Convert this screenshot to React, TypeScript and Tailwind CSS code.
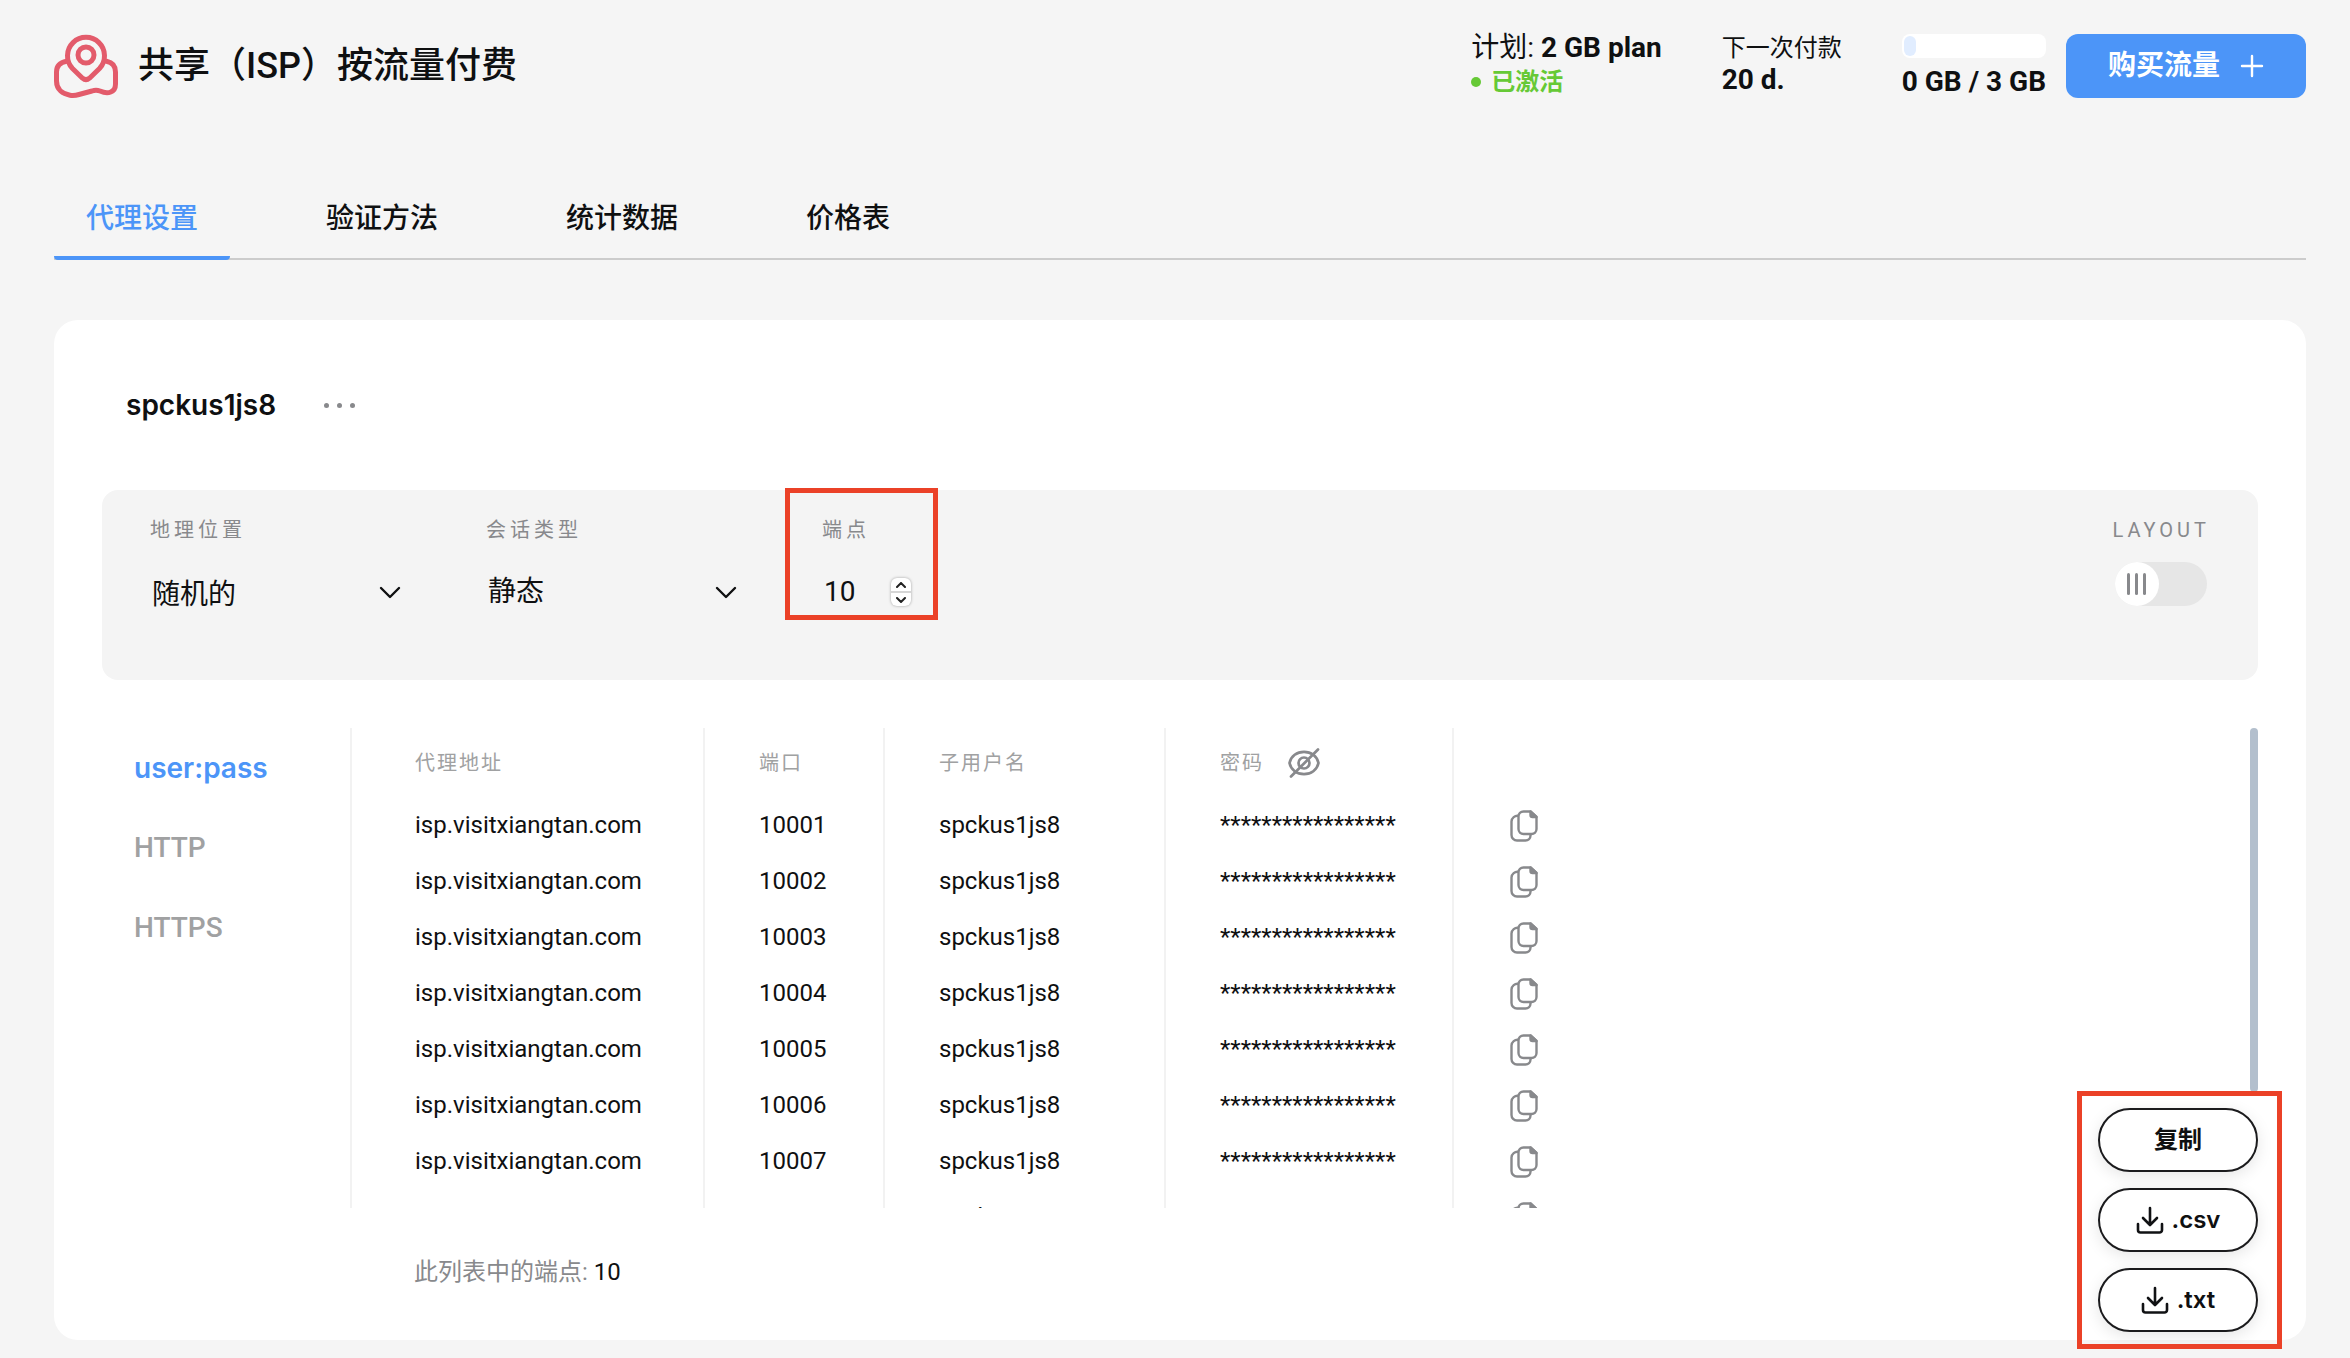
import { useState } from 'react'

const tabs = ['代理设置', '验证方法', '统计数据', '价格表']
const authModes = ['user:pass', 'HTTP', 'HTTPS']

const endpoints = Array.from({ length: 10 }, (_, i) => ({
  host: 'isp.visitxiangtan.com',
  port: 10001 + i,
  user: 'spckus1js8',
}))

function MapPinIcon() {
  return (
    <svg viewBox="0 0 64 64" className="h-16 w-16 shrink-0" fill="none" stroke="#e35b6b" strokeWidth="5" strokeLinecap="round" strokeLinejoin="round">
      <circle cx="32" cy="21" r="8" />
      <path d="M28.500 44.200 18.500 34.500A18.500 18.500 0 1 1 45.500 34.500L35.500 44.200Q32 47.200 28.500 44.200Z" />
      <path d="M12.500 27.200Q2.500 29 2.500 38V47C2.500 56 9 60 16 61.200Q20 62 25 60.500L38 57Q42 55.500 46 57C54 60.500 61.500 58.500 61.500 50V38Q61.500 29 52.500 27.200" />
    </svg>
  )
}

function Chevron() {
  return (
    <svg viewBox="0 0 24 24" className="pointer-events-none h-6 w-6" fill="none" stroke="#0f1011" strokeWidth="2.400" strokeLinecap="round" strokeLinejoin="round">
      <path d="m3 8 9 9 9-9" />
    </svg>
  )
}

function HiddenEyeIcon() {
  return (
    <svg viewBox="0 0 32 32" className="h-8 w-8" fill="none" stroke="#88898c" strokeWidth="2.700" strokeLinecap="round">
      <path d="M1.500 16C3 9 9 4.800 16 4.800S29 9 30.500 16C29 23 23 27.200 16 27.200S3 23 1.500 16Z" />
      <circle cx="16" cy="16" r="5.500" />
      <path d="M3 29.500 30 2.500" />
    </svg>
  )
}

function CopyIcon() {
  return (
    <svg viewBox="0 0 28 32" className="h-8 w-7" fill="none" stroke="#88898c" strokeWidth="2.400" strokeLinejoin="round">
      <path d="M13.500 1.500h7l6 5.500v12a5 5 0 0 1-5 5h-8a5 5 0 0 1-5-5V6.500a5 5 0 0 1 5-5Z" />
      <path d="M8.500 5.800A6 6 0 0 0 1.500 11.500v13.500a5.500 5.500 0 0 0 5.500 5.500h8.500a5 5 0 0 0 5-5V24" />
      <path d="M20.500 1.500V5a2 2 0 0 0 2 2h4Z" fill="#88898c" />
    </svg>
  )
}

function DownloadIcon() {
  return (
    <svg viewBox="0 0 28 28" className="h-7 w-7" fill="none" stroke="#111214" strokeWidth="2.600" strokeLinecap="round" strokeLinejoin="round">
      <path d="M14 2v16M7 12l7 7 7-7" />
      <path d="M2 18v6a2.500 2.500 0 0 0 2.500 2.500h19A2.500 2.500 0 0 0 26 24v-6" />
    </svg>
  )
}

function Header() {
  return (
    <header className="flex items-start justify-between">
      <div className="flex items-center gap-5">
        <MapPinIcon />
        <h1 className="text-4xl font-medium">共享（ISP）按流量付费</h1>
      </div>
      <div className="flex items-start gap-5">
        <div className="mr-10 text-[28px] leading-7">
          <p>
            计划: <b>2 GB plan</b>
          </p>
          <p className="mt-1.5 flex items-center gap-2.5 text-2xl leading-7 font-bold text-[#66c936]">
            <span className="h-2.5 w-2.5 rounded-full bg-[#66c936]" />
            已激活
          </p>
        </div>
        <div className="mr-10 text-2xl leading-7">
          <p>下一次付款</p>
          <p className="mt-0.5 text-[28px] leading-8 font-bold">20 d.</p>
        </div>
        <div>
          <div className="h-6 rounded-lg bg-white p-0.5">
            <div className="h-full w-3 rounded-lg bg-[#e1edff]" />
          </div>
          <p className="mt-2 text-[28px] leading-8 font-bold">0 GB / 3 GB</p>
        </div>
        <button className="flex h-16 w-60 items-center justify-center gap-5 rounded-xl bg-[#4c95f8] text-[28px] font-bold text-white">
          购买流量
          <svg viewBox="0 0 24 24" className="h-6 w-6" stroke="currentColor" strokeWidth="2.400" strokeLinecap="round">
            <path d="M12 2v20M2 12h20" />
          </svg>
        </button>
      </div>
    </header>
  )
}

function Filters() {
  const [count, setCount] = useState(10)
  const label = 'text-xl leading-7 tracking-[4px] text-[#88898c]'

  return (
    <div className="flex min-h-[190px] items-start rounded-2xl bg-[#f4f4f4] px-12 pt-[26px]">
      <div className="w-[336px]">
        <label htmlFor="location" className={label}>地理位置</label>
        <div className="mt-6 grid w-[252px] grid-cols-[1fr_24px] items-center">
          <select id="location" className="col-span-2 col-start-1 row-start-1 h-12 appearance-none pt-1.5 pl-0.5 text-[28px]">
            <option>随机的</option>
          </select>
          <div className="col-start-2 row-start-1">
            <Chevron />
          </div>
        </div>
      </div>
      <div className="w-[336px]">
        <label htmlFor="session" className={label}>会话类型</label>
        <div className="mt-6 grid w-[252px] grid-cols-[1fr_24px] items-center">
          <select id="session" className="col-span-2 col-start-1 row-start-1 h-12 appearance-none pl-0.5 text-[28px]">
            <option>静态</option>
          </select>
          <div className="col-start-2 row-start-1">
            <Chevron />
          </div>
        </div>
      </div>
      <div className="relative">
        <div className="pointer-events-none absolute -top-7 -left-[37px] h-[132px] w-[153px] border-5 border-[#eb4127]" />
        <label htmlFor="count" className={label}>端点</label>
        <div className="mt-6 flex h-12 items-center">
          <input
            id="count"
            type="number"
            value={count}
            onChange={(e) => setCount(Number(e.target.value))}
            className="w-[69px] [appearance:textfield] pl-0.5 text-[28px] outline-none [&::-webkit-inner-spin-button]:appearance-none"
          />
          <div className="flex h-7 w-5 flex-col divide-y-2 divide-[#d6d6d6] rounded-md bg-white shadow-[0_0_3px_rgba(0,0,0,0.35)]">
            <button aria-label="+" onClick={() => setCount(count + 1)} className="flex flex-1 items-center justify-center">
              <svg viewBox="0 0 10 6" className="h-1.5 w-2.5" fill="none" stroke="#222" strokeWidth="2" strokeLinecap="round">
                <path d="m1 5 4-4 4 4" />
              </svg>
            </button>
            <button aria-label="-" onClick={() => setCount(count - 1)} className="flex flex-1 items-center justify-center">
              <svg viewBox="0 0 10 6" className="h-1.5 w-2.5" fill="none" stroke="#222" strokeWidth="2" strokeLinecap="round">
                <path d="m1 1 4 4 4-4" />
              </svg>
            </button>
          </div>
        </div>
      </div>
      <label className="ml-auto">
        <span className={label}>LAYOUT</span>
        <input type="checkbox" className="peer sr-only" />
        <span className="mt-[18px] ml-0.5 flex h-11 w-[92px] rounded-full bg-[#e6e6e6] peer-checked:justify-end">
          <span className="flex h-11 w-11 items-center justify-center gap-[5px] rounded-full bg-white">
            <i className="h-[22px] w-[3px] rounded-full bg-[#88898c]" />
            <i className="h-[22px] w-[3px] rounded-full bg-[#88898c]" />
            <i className="h-[22px] w-[3px] rounded-full bg-[#88898c]" />
          </span>
        </span>
      </label>
    </div>
  )
}

function EndpointTable() {
  const head = 'h-[70px] text-left text-xl font-normal tracking-[2px] text-[#a0a1a2]'

  return (
    <div className="flex h-[480px]">
      <div className="flex-1 overflow-y-auto [scrollbar-width:none]">
        <table className="w-[1220px] table-fixed border-collapse text-2xl">
          <colgroup>
            <col className="w-[353px]" />
            <col className="w-[180px]" />
            <col className="w-[281px]" />
            <col className="w-[288px]" />
            <col />
          </colgroup>
          <thead>
            <tr className="*:border-l-2 *:border-[#f2f2f2]">
              <th className={`${head} pl-[63px]`}>代理地址</th>
              <th className={`${head} pl-[54px]`}>端口</th>
              <th className={`${head} pl-[54px]`}>子用户名</th>
              <th className={`${head} pl-[54px]`}>
                <div className="flex items-center gap-6">
                  密码
                  <button aria-label="显示密码">
                    <HiddenEyeIcon />
                  </button>
                </div>
              </th>
              <th />
            </tr>
          </thead>
          <tbody>
            {endpoints.map(({ host, port, user }) => (
              <tr key={port} className="h-14 *:border-l-2 *:border-[#f2f2f2]">
                <td className="pb-0.5 pl-[63px]">{host}</td>
                <td className="pb-0.5 pl-[54px]">{port}</td>
                <td className="pb-0.5 pl-[54px]">{user}</td>
                <td className="pb-0.5 pl-[54px]">*****************</td>
                <td className="pl-14">
                  <button aria-label="复制" className="block">
                    <CopyIcon />
                  </button>
                </td>
              </tr>
            ))}
          </tbody>
        </table>
      </div>
      <div className="h-[364px] w-2 rounded-full bg-[#b3bfcd]" />
    </div>
  )
}

export default function App() {
  const [tab, setTab] = useState(tabs[0])
  const [mode, setMode] = useState(authModes[0])
  const pill =
    'flex h-16 w-40 items-center justify-center gap-2 rounded-full border-2 border-[#1b1b1d] bg-white font-[Inter,"Noto_Sans_CJK_SC",sans-serif] text-2xl font-semibold shadow-[0_4px_16px_rgba(0,0,0,0.1)]'

  return (
    <div className="min-h-screen bg-[#f5f5f5] pt-[34px] pr-11 pb-[18px] pl-[54px] font-[Roboto,'Noto_Sans_CJK_SC',sans-serif] text-[#0f1011]">
      <Header />

      <nav className="mt-[86px] flex gap-16 border-b-2 border-[#cccccc] text-[28px] font-medium">
        {tabs.map((t) => (
          <button
            key={t}
            onClick={() => setTab(t)}
            className={`-mb-0.5 h-[76px] border-b-4 px-8 pb-0.5 ${t === tab ? 'rounded-b-sm border-[#4c95f8] text-[#4c95f8]' : 'border-transparent'}`}
          >
            {t}
          </button>
        ))}
      </nav>

      <main className="mt-[60px] rounded-3xl bg-white px-12 pt-16 pb-2">
        <div className="flex h-[42px] items-center gap-12 pl-6">
          <h2 className="font-[Inter,sans-serif] text-[28px] font-semibold">spckus1js8</h2>
          <button aria-label="更多" className="flex gap-2">
            <i className="h-[5px] w-[5px] rounded-full bg-[#88898c]" />
            <i className="h-[5px] w-[5px] rounded-full bg-[#88898c]" />
            <i className="h-[5px] w-[5px] rounded-full bg-[#88898c]" />
          </button>
        </div>

        <div className="mt-16">
          <Filters />
        </div>

        <div className="mt-12 flex">
          <div className="flex w-62 flex-col items-start gap-10 pt-5 pl-8 text-[28px] leading-10">
            {authModes.map((m) => (
              <button
                key={m}
                onClick={() => setMode(m)}
                className={m === mode ? 'font-[Inter,sans-serif] font-semibold text-[#4c95f8]' : 'font-medium text-[#a0a1a2]'}
              >
                {m}
              </button>
            ))}
          </div>
          <div className="flex-1">
            <EndpointTable />
            <p className="mt-12 pl-16 text-2xl">
              <span className="text-[#88898c]">此列表中的端点: </span>10
            </p>
          </div>
        </div>

        <div className="relative -mt-45 ml-auto flex w-40 flex-col gap-4">
          <div className="pointer-events-none absolute -inset-y-[17px] -right-6 -left-[21px] border-5 border-[#eb4127]" />
          <button className={pill}>复制</button>
          <button className={pill}>
            <DownloadIcon />
            .csv
          </button>
          <button className={pill}>
            <DownloadIcon />
            .txt
          </button>
        </div>
      </main>
    </div>
  )
}
